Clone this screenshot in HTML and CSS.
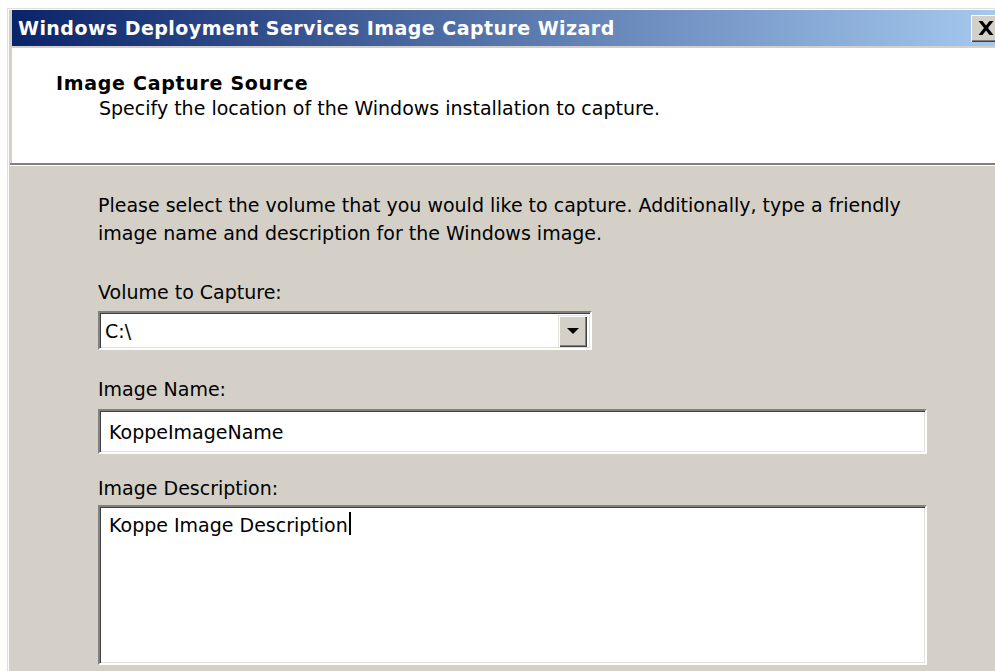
FILE: index.html
```html
<!DOCTYPE html>
<html lang="en">
<head>
<meta charset="utf-8">
<title>Windows Deployment Services Image Capture Wizard</title>
<link rel="stylesheet" href="styles.css">
</head>
<body>
<div class="window">
  <div class="titlebar">
    <span class="title">Windows Deployment Services Image Capture Wizard</span>
    <button class="close" type="button" aria-label="Close">
      <svg width="16" height="14" viewBox="0 0 16 14"><path d="M0.5 0h4l3.5 4.6L11.5 0h4l-5.5 7 5.5 7h-4L8 9.4 4.5 14h-4L6 7z" fill="#000"/></svg>
    </button>
  </div>
  <div class="header">
    <div class="header-title">Image Capture Source</div>
    <div class="header-sub">Specify the location of the Windows installation to capture.</div>
  </div>
  <div class="rule"></div>
  <div class="content">
    <p class="intro">Please select the volume that you would like to capture. Additionally, type a friendly image name and description for the Windows image.</p>
    <div class="field field-volume">
      <div class="label">Volume to Capture:</div>
      <div class="combo sunken">
        <span class="value">C:\</span>
        <span class="drop"><span class="arrow"></span></span>
      </div>
    </div>
    <div class="field field-name">
      <div class="label">Image Name:</div>
      <div class="textbox sunken"><span class="value">KoppeImageName</span></div>
    </div>
    <div class="field field-desc">
      <div class="label">Image Description:</div>
      <div class="textarea sunken"><span class="value">Koppe Image Description</span><span class="caret"></span></div>
    </div>
  </div>
</div>
</body>
</html>
```

FILE: styles.css
```css
html, body {
  margin: 0;
  height: 671px;
  overflow: hidden;
  background: #fff;
}

body {
  font-family: "DejaVu Sans", "Liberation Sans", sans-serif;
  color: #000;
}

/* dialog frame */
.window {
  margin: 8px 0 0 7px;
  width: 1000px;
  height: 663px;
  box-sizing: border-box;
  padding: 2px 0 0 3px;
  background: #d4d0c8;
  box-shadow: inset 1px 1px 0 #e2dfd8, inset 2px 2px 0 #fbfbfa;
  display: flex;
  flex-direction: column;
}

.titlebar {
  height: 36px;
  margin-left: 2px;
  padding: 0 6px 0 6px;
  display: flex;
  align-items: center;
  background: linear-gradient(to right, #0a246a 0%, #a6caf0 100%);
  flex-shrink: 0;
}

.title {
  color: #fff;
  font-weight: bold;
  font-size: 19px;
  letter-spacing: 0.45px;
  white-space: nowrap;
}

.close {
  margin-left: auto;
  width: 30px;
  height: 27px;
  padding: 0;
  border: 0;
  background: #d4d0c8;
  box-shadow: inset 1px 1px 0 #fff, inset -1px -1px 0 #404040, inset -2px -2px 0 #808080;
  display: flex;
  align-items: center;
  justify-content: center;
}

.header {
  margin: 2px 0 0 2px;
  height: 115px;
  box-sizing: border-box;
  padding: 25px 0 0 44px;
  background: #fff;
  flex-shrink: 0;
}

.header-title {
  font-weight: bold;
  font-size: 19px;
  line-height: 20px;
  letter-spacing: 0.7px;
}

.header-sub {
  margin: 5px 0 0 43px;
  font-size: 19px;
  line-height: 20px;
}

.rule {
  height: 2px;
  border-bottom: 1px solid #fff;
  background: #808080;
  flex-shrink: 0;
}

.content {
  padding: 25px 0 0 88px;
  font-size: 19px;
}

.intro {
  margin: 0;
  width: 830px;
  line-height: 28px;
}

.label {
  line-height: 28px;
}

.field-volume {
  margin-top: 31px;
}

.field-volume .label {
  margin-bottom: 5px;
}

.field-name {
  margin-top: 25px;
}

.field-name .label {
  margin-bottom: 6px;
}

.field-desc {
  margin-top: 20px;
}

.field-desc .label {
  margin-bottom: 3px;
}

/* classic 3D sunken well */
.sunken {
  box-sizing: border-box;
  background: #fff;
  border-style: solid;
  border-width: 2px;
  border-color: #808080 #fff #fff #808080;
  box-shadow: inset 1px 1px 0 #404040, inset -1px -1px 0 #e4e1da;
  display: flex;
}

.value {
  white-space: nowrap;
}

.combo {
  width: 494px;
  height: 39px;
  align-items: center;
  padding: 0 3px 0 5px;
}

.combo .value {
  flex: 1;
}

.drop {
  width: 29px;
  height: 32px;
  box-sizing: border-box;
  background: #d4d0c8;
  box-shadow: inset 1px 1px 0 #e4e1da, inset 2px 2px 0 #fff, inset -1px -1px 0 #404040, inset -2px -2px 0 #808080;
  display: flex;
  align-items: center;
  justify-content: center;
}

.arrow {
  width: 0;
  height: 0;
  border-left: 6px solid transparent;
  border-right: 6px solid transparent;
  border-top: 6px solid #000;
}

.textbox {
  width: 829px;
  height: 45px;
  align-items: center;
  padding-left: 9px;
}

.textarea {
  width: 829px;
  height: 160px;
  align-items: flex-start;
  padding: 7px 0 0 9px;
  line-height: 22px;
}

.caret {
  width: 2px;
  height: 23px;
  background: #000;
  margin: -2px 0 0 1px;
}
```
